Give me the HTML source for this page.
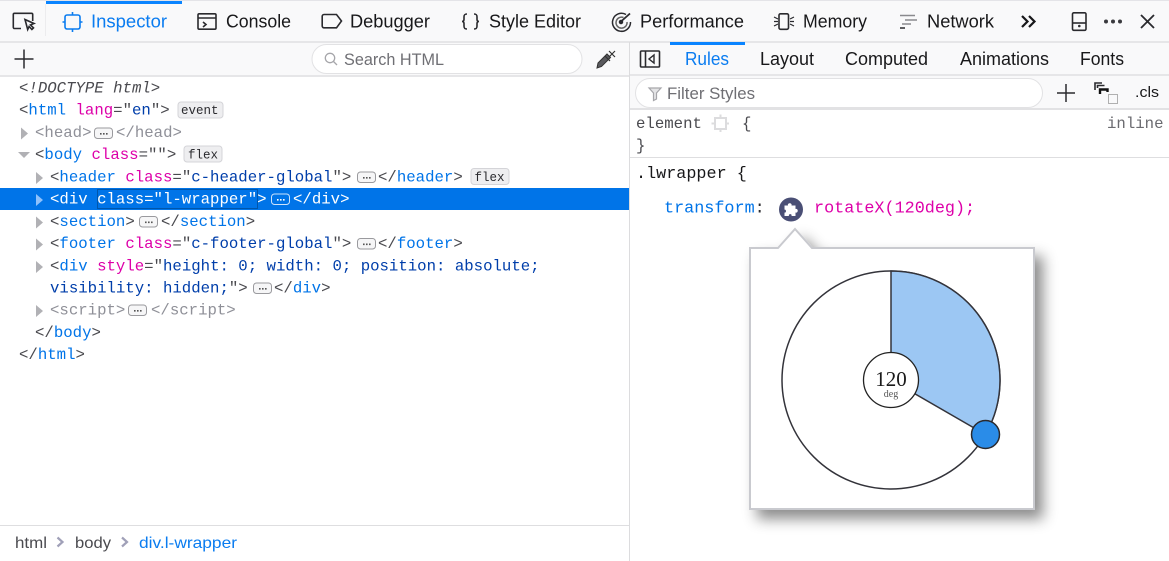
<!DOCTYPE html>
<html lang="en"><head><meta charset="utf-8"><title>Inspector</title>
<style>
html,body{margin:0;padding:0;background:#fff;width:1169px;height:561px;overflow:hidden}
svg{display:block;position:absolute;left:0;top:0}
.s{font-family:"Liberation Sans",sans-serif;font-size:18px;fill:#18181a}
.b{fill:#0a7cf0}
.m{font-family:"Liberation Mono",monospace;font-size:15.7px;fill:#4a4a4f;white-space:pre}
.r{font-size:16.8px}
.t{fill:#0074e8}.a{fill:#dd00a9}.v{fill:#003eaa}.g{fill:#8f9098}
.i{fill:none;stroke:#2a2a2e;stroke-width:1.6}
.ev{font-family:"Liberation Mono",monospace;font-size:12.5px;fill:#2a2a2e}
</style></head><body>
<svg width="1169" height="561" viewBox="0 0 1169 561" xmlns="http://www.w3.org/2000/svg">
<defs><filter id="sh" x="-20%" y="-20%" width="140%" height="140%"><feDropShadow dx="8" dy="9" stdDeviation="7" flood-color="#000" flood-opacity=".45"/></filter></defs>
<!-- backgrounds -->
<rect width="1169" height="561" fill="#fff"/>
<rect width="1169" height="42" fill="#f9f9fa"/>
<rect width="1169" height="1" fill="#e4e4e8"/>
<rect y="41" width="1169" height="2" fill="#e6e6e8"/>
<rect y="43" width="629" height="32" fill="#f9f9fa"/>
<rect y="75" width="629" height="2" fill="#e6e6e8"/>
<rect x="630" y="43" width="539" height="31" fill="#f9f9fa"/>
<rect x="630" y="74" width="539" height="2" fill="#e6e6e8"/>
<rect x="630" y="76" width="539" height="33" fill="#f9f9fa"/>
<rect x="630" y="108" width="539" height="2" fill="#e2e2e4"/>
<rect x="630" y="157" width="539" height="1" fill="#dedee0"/>
<rect x="629" y="42" width="1" height="519" fill="#dcdcde"/>
<rect y="525" width="629" height="1" fill="#dedee0"/>
<rect x="46" y="1" width="136" height="3" fill="#0a84ff"/>
<rect x="670" y="42" width="75" height="3" fill="#0a84ff"/>
<rect x="45" y="4" width="1" height="32" fill="#ececee"/>

<!-- toolbar icons -->
<path class="i" d="M21 28.500h-6.500a1.200 1.200 0 0 1-1.200-1.200V14.500a1.200 1.200 0 0 1 1.200-1.200h17a1.200 1.200 0 0 1 1.200 1.200V21"/>
<path class="i" d="M25 19.500l9 4-3.500 1.400 3 3-1.600 1.600-2.800-3-1.400 3z"/>
<g fill="none" stroke="#0a7cf0" stroke-width="1.600"><rect x="65" y="15" width="15" height="14" rx="2"/><path d="M72.500 12v3M72.500 29v3M62.500 22H65M80 22h2.500"/></g>
<text class="s b" x="91" y="27.500" textLength="76" lengthAdjust="spacingAndGlyphs">Inspector</text>
<rect class="i" x="198" y="13.800" width="18" height="15.400" rx="1.200"/><path class="i" d="M198 18h18M203 22l3 2.500-3 2.500"/>
<text class="s" x="226" y="27.500" textLength="65" lengthAdjust="spacingAndGlyphs">Console</text>
<path class="i" d="M324 14.500h12.500l5 6.500-5 6.800H324a1.800 1.800 0 0 1-1.800-1.800V16.300a1.800 1.800 0 0 1 1.800-1.800z"/>
<text class="s" x="350" y="27.500" textLength="80" lengthAdjust="spacingAndGlyphs">Debugger</text>
<path class="i" d="M467 14c-2.500 0-3 1-3 3v2.500c0 1.500-.8 2-2 2 1.200 0 2 .5 2 2V26c0 2 .5 3 3 3M474 14c2.500 0 3 1 3 3v2.500c0 1.500.8 2 2 2-1.200 0-2 .5-2 2V26c0 2-.5 3-3 3"/>
<text class="s" x="489" y="27.500" textLength="92" lengthAdjust="spacingAndGlyphs">Style Editor</text>
<g fill="none" stroke="#2a2a2e" stroke-width="1.500"><path d="M626 14.500a9 9 0 1 0 4.500 7.500"/><path d="M623.500 17.500a5.500 5.500 0 1 0 3.500 4.500" stroke="#666"/><path d="M621 21.500l9-8" stroke-width="1.800"/><circle cx="621" cy="22" r="1.500" fill="#2a2a2e"/></g>
<text class="s" x="640" y="27.500" textLength="104" lengthAdjust="spacingAndGlyphs">Performance</text>
<rect class="i" x="779" y="13.800" width="9.500" height="15.500" rx="1.500"/><path d="M774 17l4 2M774 21.500h4M774 26l4-2M794 17l-4 2M794 21.500h-4M794 26l-4-2" fill="none" stroke="#2a2a2e" stroke-width="1.200"/>
<text class="s" x="803" y="27.500" textLength="64" lengthAdjust="spacingAndGlyphs">Memory</text>
<path d="M900 15.500h15M905 20h12" stroke="#8a8a8e" stroke-width="1.500" fill="none"/><path d="M902 24h9" stroke="#8a8a8e" stroke-width="1.500"/><path d="M900 28h5" stroke="#2a2a2e" stroke-width="1.500"/>
<text class="s" x="927" y="27.500" textLength="67" lengthAdjust="spacingAndGlyphs">Network</text>
<path d="M1022 16l5.500 5.500-5.500 5.500M1029 16l5.500 5.500-5.500 5.500" fill="none" stroke="#18181a" stroke-width="2.200"/>
<rect class="i" x="1072.500" y="12.800" width="13.500" height="17.500" rx="1.300"/><path class="i" d="M1072.500 23h13.500"/><circle cx="1079.300" cy="26" r="1.300" fill="#2a2a2e"/>
<circle cx="1106" cy="21.500" r="2" fill="#3a3a3e"/><circle cx="1113" cy="21.500" r="2" fill="#3a3a3e"/><circle cx="1120" cy="21.500" r="2" fill="#3a3a3e"/>
<path d="M1141 15l13 13M1154 15l-13 13" stroke="#2a2a2e" stroke-width="1.800" fill="none"/>

<!-- markup toolbar -->
<path d="M24 49.500v19M14.500 59h19" stroke="#2a2a2e" stroke-width="1.500" fill="none"/>
<rect x="312" y="44.500" width="270" height="29" rx="14.500" fill="#fff" stroke="#e2e2e4"/>
<circle cx="330" cy="58" r="4.700" fill="none" stroke="#a6a6aa" stroke-width="1.300"/><path d="M333.500 61.500l3.500 3.500" stroke="#a6a6aa" stroke-width="1.300"/>
<text class="s" x="344" y="65" textLength="100" lengthAdjust="spacingAndGlyphs" style="font-size:16.500px;fill:#6f6f74">Search HTML</text>
<path d="M597 68l1-5 9-9 3.500 3.500-9 9z" fill="#5a5a5e" stroke="#333" stroke-width="1"/><path d="M605 56l5 5M609 51l6 6M615 51l-6 6" stroke="#333" stroke-width="1.200" fill="none"/>

<!-- sidebar tabs -->
<rect class="i" x="640.500" y="51" width="19" height="16" rx="1"/><path class="i" d="M645.500 51v16"/><path d="M654 55v8l-5-4z" fill="none" stroke="#2a2a2e" stroke-width="1.400"/>
<text class="s b" x="685" y="65" textLength="44" lengthAdjust="spacingAndGlyphs">Rules</text>
<text class="s" x="760" y="65" textLength="54" lengthAdjust="spacingAndGlyphs">Layout</text>
<text class="s" x="845" y="65" textLength="83" lengthAdjust="spacingAndGlyphs">Computed</text>
<text class="s" x="960" y="65" textLength="89" lengthAdjust="spacingAndGlyphs">Animations</text>
<text class="s" x="1080" y="65" textLength="44" lengthAdjust="spacingAndGlyphs">Fonts</text>

<!-- filter row -->
<rect x="635.500" y="78.500" width="407" height="29" rx="14.500" fill="#fff" stroke="#e2e2e4"/>
<path d="M649 88h12l-4.500 5v6l-3 1.500V93z" fill="#e4e4e6" stroke="#a6a6aa" stroke-width="1.200"/>
<text class="s" x="667" y="99" textLength="88" lengthAdjust="spacingAndGlyphs" style="font-size:16.500px;fill:#6f6f74">Filter Styles</text>
<path d="M1066 84v18M1057 93h18" stroke="#2a2a2e" stroke-width="1.500" fill="none"/>
<path d="M1095 90v-7h7M1097.500 88v-2.500h7" fill="none" stroke="#2a2a2e" stroke-width="1.600"/><path d="M1100 94v-4.500h7.500V92" fill="none" stroke="#111" stroke-width="2.400"/>
<rect x="1108.500" y="94.500" width="9" height="9" fill="none" stroke="#666" stroke-dasharray="1 1"/>
<text class="s" x="1135" y="97" textLength="24" lengthAdjust="spacingAndGlyphs" style="font-size:15px">.cls</text>

<!-- markup -->
<rect y="188" width="629" height="22" fill="#0074e8"/>
<rect x="97.500" y="189.500" width="160" height="19" fill="none" stroke="#00376e" stroke-dasharray="1 1"/>
<g class="m">
<text class="m" x="19" y="92.500" font-style="italic">&lt;!DOCTYPE html&gt;</text>
<text class="m" x="19" y="114.700">&lt;<tspan class="t">html</tspan> <tspan class="a">lang</tspan>="<tspan class="v">en</tspan>"&gt;</text>
<text class="m g" x="35" y="137">&lt;head&gt;</text><text class="m g" x="116" y="137">&lt;/head&gt;</text>
<text class="m" x="35" y="159.200">&lt;<tspan class="t">body</tspan> <tspan class="a">class</tspan>=""&gt;</text>
<text class="m" x="50" y="181.400">&lt;<tspan class="t">header</tspan> <tspan class="a">class</tspan>="<tspan class="v">c-header-global</tspan>"&gt;</text><text class="m" x="378" y="181.400">&lt;/<tspan class="t">header</tspan>&gt;</text>
<text class="m" x="50" y="203.700" style="fill:#fff">&lt;div class="l-wrapper"&gt;</text><text class="m" x="293" y="203.700" style="fill:#fff">&lt;/div&gt;</text>
<text class="m" x="50" y="225.900">&lt;<tspan class="t">section</tspan>&gt;</text><text class="m" x="161" y="225.900">&lt;/<tspan class="t">section</tspan>&gt;</text>
<text class="m" x="50" y="248.100">&lt;<tspan class="t">footer</tspan> <tspan class="a">class</tspan>="<tspan class="v">c-footer-global</tspan>"&gt;</text><text class="m" x="378" y="248.100">&lt;/<tspan class="t">footer</tspan>&gt;</text>
<text class="m" x="50" y="270.300">&lt;<tspan class="t">div</tspan> <tspan class="a">style</tspan>="<tspan class="v">height: 0; width: 0; position: absolute;</tspan></text>
<text class="m" x="50" y="292.500"><tspan class="v">visibility: hidden;</tspan>"&gt;</text><text class="m" x="274" y="292.500">&lt;/<tspan class="t">div</tspan>&gt;</text>
<text class="m g" x="50" y="314.700">&lt;script&gt;</text><text class="m g" x="151" y="314.700">&lt;/script&gt;</text>
<text class="m" x="35" y="337">&lt;/<tspan class="t">body</tspan>&gt;</text>
<text class="m" x="19" y="359.200">&lt;/<tspan class="t">html</tspan>&gt;</text>
</g>
<!-- twisties -->
<path d="M21 127.500l7 6-7 6zM36 172l7 6-7 6zM36 216.500l7 6-7 6zM36 238.500l7 6-7 6zM36 261l7 6-7 6zM36 305l7 6-7 6z" fill="#b1b1b5"/>
<path d="M36 194l7 6-7 6z" fill="#8fc1fb"/>
<path d="M18 152h12l-6 6z" fill="#b1b1b5"/>
<!-- ellipsis badges -->
<g fill="#fff" stroke="#9a9a9e"><rect x="94.500" y="128" width="18" height="10.500" rx="3" fill="#f6f6f7"/><rect x="139.500" y="216.500" width="18" height="10.500" rx="3" fill="#f6f6f7"/><rect x="357.500" y="238.500" width="18" height="10.500" rx="3" fill="#f6f6f7"/><rect x="357.500" y="172" width="18" height="10.500" rx="3" fill="#f6f6f7"/><rect x="253.500" y="283" width="18" height="10.500" rx="3" fill="#f6f6f7"/><rect x="128.500" y="305" width="18" height="10.500" rx="3" fill="#f6f6f7"/></g>
<rect x="271.500" y="194" width="18" height="10.500" rx="3" fill="#0074e8" stroke="#cde3fb"/>
<g fill="#555"><path d="M100 133h1.600v1.600H100zM103 133h1.600v1.600H103zM106 133h1.600v1.600H106zM145 221.500h1.600v1.600H145zM148 221.500h1.600v1.600H148zM151 221.500h1.600v1.600H151zM363 243.500h1.600v1.600H363zM366 243.500h1.600v1.600H366zM369 243.500h1.600v1.600H369zM363 177h1.600v1.600H363zM366 177h1.600v1.600H366zM369 177h1.600v1.600H369zM259 288h1.600v1.600H259zM262 288h1.600v1.600H262zM265 288h1.600v1.600H265zM134 310h1.600v1.600H134zM137 310h1.600v1.600H137zM140 310h1.600v1.600H140z"/></g>
<path d="M277 199h1.600v1.600H277zM280 199h1.600v1.600H280zM283 199h1.600v1.600H283z" fill="#fff"/>
<!-- event/flex badges -->
<g fill="#eeeef0" stroke="#d4d4d8"><rect x="178" y="102" width="45" height="16" rx="3"/><rect x="184" y="146" width="38" height="16" rx="3"/><rect x="471" y="168.500" width="38" height="16" rx="3"/></g>
<text class="ev" x="181" y="114">event</text><text class="ev" x="188" y="158.500">flex</text><text class="ev" x="474.500" y="181">flex</text>

<!-- breadcrumb -->
<text class="s" x="15" y="548" textLength="32" lengthAdjust="spacingAndGlyphs" style="font-size:16px;fill:#4a4a4f">html</text>
<path d="M57.500 537.500l5 4.500-5 4.500" fill="none" stroke="#a0a0b8" stroke-width="2.200"/>
<text class="s" x="75" y="548" textLength="36" lengthAdjust="spacingAndGlyphs" style="font-size:16px;fill:#4a4a4f">body</text>
<path d="M122 537.500l5 4.500-5 4.500" fill="none" stroke="#a0a0b8" stroke-width="2.200"/>
<text class="s b" x="139" y="548" textLength="98" lengthAdjust="spacingAndGlyphs" style="font-size:16px">div.l-wrapper</text>

<!-- rules -->
<text class="m" x="636" y="128">element</text>
<g fill="none" stroke="#dcdcde" stroke-width="2"><rect x="715" y="118" width="11" height="11"/><path d="M720.500 114.500v3M720.500 129v3M711.500 123.500h3M726 123.500h3"/></g>
<text class="m" x="742" y="128">{</text>
<text class="m" x="636" y="150">}</text>
<text class="m" x="1107" y="128" style="fill:#6b6b70">inline</text>
<text class="m r" x="636" y="178" style="fill:#18181a">.lwrapper {</text>
<text class="m r" x="664" y="212.500"><tspan class="t">transform</tspan><tspan style="fill:#2a2a2e">:</tspan></text>
<circle cx="791" cy="209.500" r="12" fill="#4a4f75"/>
<path d="M784.500 205.500h3.500c-1-3 4.500-3 3.500 0h4v3.500c3-1 3 4.500 0 3.500v3.500h-4c1-2.500-3.500-2.500-2.500 0h-4.500v-3.500c2 .8 2-3.500 0-2.800z" fill="#fff"/>
<text class="m r a" x="814" y="212.500">rotateX(120deg);</text>

<!-- popover -->
<path d="M750 248H778L795 229L812 248H1034V509H750Z" fill="#fff" stroke="#c9cacf" stroke-width="2" filter="url(#sh)"/>
<circle cx="891" cy="380" r="109" fill="#fff" stroke="#33333a" stroke-width="1.500"/>
<path d="M891 380V271A109 109 0 0 1 985.400 434.500Z" fill="#9cc7f3" stroke="#33333a" stroke-width="1.500"/>
<circle cx="985.500" cy="434.500" r="14" fill="#2a8ce8" stroke="#2a2a2e" stroke-width="1.500"/>
<circle cx="891" cy="380" r="27.500" fill="#fff" stroke="#222" stroke-width="1.300"/>
<text x="891" y="386" text-anchor="middle" style="font-family:'Liberation Serif',serif;font-size:21px;fill:#1a1a1a">120</text>
<text x="891" y="397" text-anchor="middle" style="font-family:'Liberation Serif',serif;font-size:10px;fill:#555">deg</text>
</svg>
</body></html>
